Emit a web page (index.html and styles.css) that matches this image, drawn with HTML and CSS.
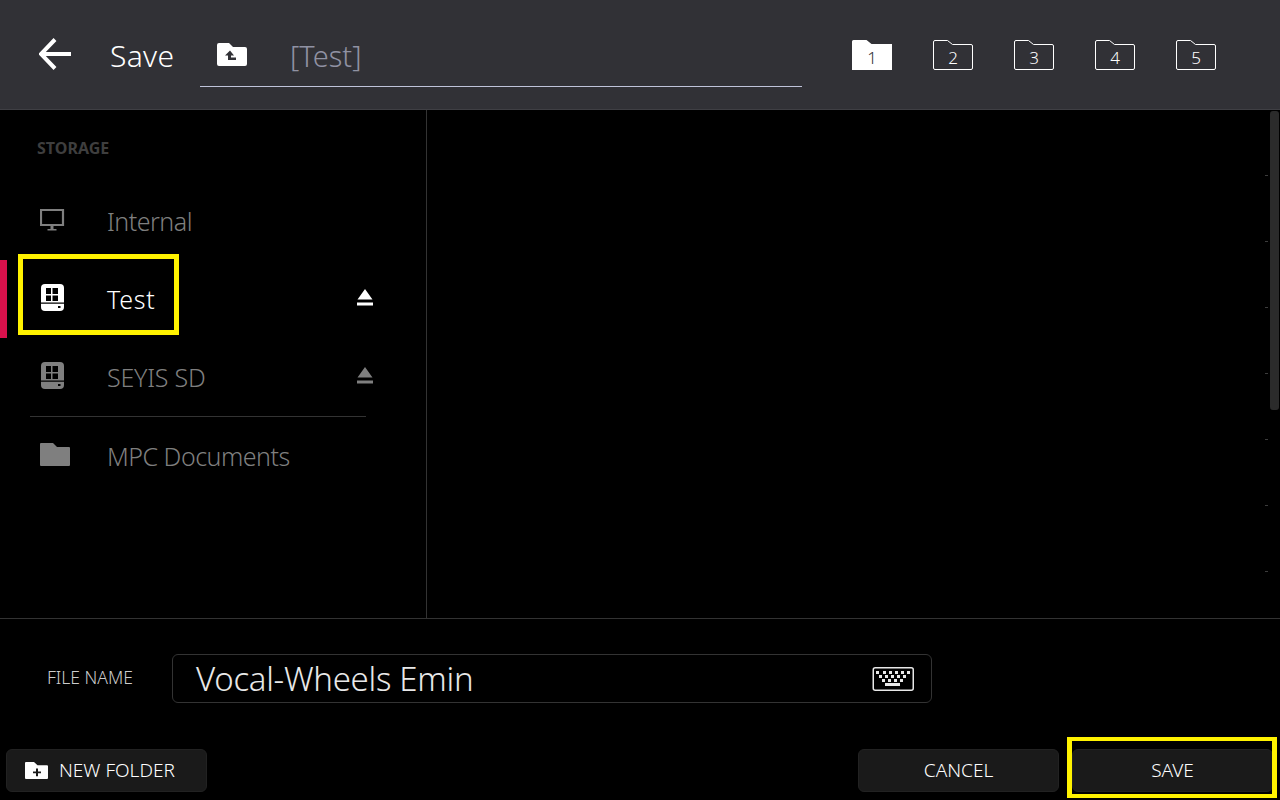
FILE: index.html
```html
<!DOCTYPE html>
<html lang="en">
<head>
<meta charset="utf-8">
<title>Save</title>
<link rel="stylesheet" href="styles.css">
</head>
<body>
<div class="page">
  <header class="header">
    <svg class="back" width="32" height="32" viewBox="0 0 32 32"><path d="M32 16H3M16 1.500L2 16l14 14.500" fill="none" stroke="#fff" stroke-width="4"/></svg>
    <h1 class="title">Save</h1>
    <div class="path">
      <svg class="up" width="30" height="23" viewBox="0 0 30 23"><path d="M2 0h10l4 4h12a2 2 0 0 1 2 2v15a2 2 0 0 1-2 2H2a2 2 0 0 1-2-2V2a2 2 0 0 1 2-2z" fill="#fff"/><path d="M13 7.500l-5 5h3v4.500h8v-2.500h-5v-2h3z" fill="#313136"/></svg>
      <span class="path-text">[Test]</span>
    </div>
    <div class="slots">
      <div class="slot active"><svg width="40" height="30" viewBox="0 0 40 30"><path d="M0 1.500A1.500 1.500 0 0 1 1.500 0h13l5 4H40v26H0z" fill="#fff"/></svg><span>1</span></div>
      <div class="slot"><svg width="40" height="30" viewBox="0 0 40 30"><path d="M.5 2A1.500 1.500 0 0 1 2 .5h12.500l5 4H38A1.500 1.500 0 0 1 39.500 6v22a1.500 1.500 0 0 1-1.500 1.500H2A1.500 1.500 0 0 1 .5 28z" fill="none" stroke="#fff"/></svg><span>2</span></div>
      <div class="slot"><svg width="40" height="30" viewBox="0 0 40 30"><path d="M.5 2A1.500 1.500 0 0 1 2 .5h12.500l5 4H38A1.500 1.500 0 0 1 39.500 6v22a1.500 1.500 0 0 1-1.500 1.500H2A1.500 1.500 0 0 1 .5 28z" fill="none" stroke="#fff"/></svg><span>3</span></div>
      <div class="slot"><svg width="40" height="30" viewBox="0 0 40 30"><path d="M.5 2A1.500 1.500 0 0 1 2 .5h12.500l5 4H38A1.500 1.500 0 0 1 39.500 6v22a1.500 1.500 0 0 1-1.500 1.500H2A1.500 1.500 0 0 1 .5 28z" fill="none" stroke="#fff"/></svg><span>4</span></div>
      <div class="slot"><svg width="40" height="30" viewBox="0 0 40 30"><path d="M.5 2A1.500 1.500 0 0 1 2 .5h12.500l5 4H38A1.500 1.500 0 0 1 39.500 6v22a1.500 1.500 0 0 1-1.500 1.500H2A1.500 1.500 0 0 1 .5 28z" fill="none" stroke="#fff"/></svg><span>5</span></div>
    </div>
  </header>

  <main class="content">
    <aside class="sidebar">
      <div class="section-label">STORAGE</div>
      <div class="row dim">
        <span class="icon"><svg width="26" height="22" viewBox="0 0 26 22"><path d="M1 1h22v15H1z" fill="none" stroke="currentColor" stroke-width="2.200"/><path d="M10.500 17h3v3h3v1.500h-9V20h3z" fill="currentColor"/></svg></span>
        <span class="name">Internal</span>
      </div>
      <div class="row selected">
        <span class="icon"><svg width="23" height="27" viewBox="0 0 23 27"><path d="M4 0h15a4 4 0 0 1 4 4v19a4 4 0 0 1-4 4H4a4 4 0 0 1-4-4V4a4 4 0 0 1 4-4z" fill="currentColor"/><path d="M5 4h5v6H5zM11.500 4H17v6h-5.500zM5 11.500h5V17H5zM11.500 11.500H17V17h-5.500zM0 18.500h23v1.300H0zM17 22h2.500v2H17z" fill="#000"/></svg></span>
        <span class="name">Test</span>
        <svg class="eject" width="16" height="17" viewBox="0 0 16 17"><path d="M8 0l7.500 10.500H.5zM0 13.500h16V16.500H0z" fill="currentColor"/></svg>
      </div>
      <div class="row dim">
        <span class="icon"><svg width="23" height="27" viewBox="0 0 23 27"><path d="M4 0h15a4 4 0 0 1 4 4v19a4 4 0 0 1-4 4H4a4 4 0 0 1-4-4V4a4 4 0 0 1 4-4z" fill="currentColor"/><path d="M5 4h5v6H5zM11.500 4H17v6h-5.500zM5 11.500h5V17H5zM11.500 11.500H17V17h-5.500zM0 18.500h23v1.300H0zM17 22h2.500v2H17z" fill="#000"/></svg></span>
        <span class="name name-wide">SEYIS SD</span>
        <svg class="eject" width="16" height="17" viewBox="0 0 16 17"><path d="M8 0l7.500 10.500H.5zM0 13.500h16V16.500H0z" fill="currentColor"/></svg>
      </div>
      <div class="divider"></div>
      <div class="row dim last">
        <span class="icon"><svg width="30" height="23" viewBox="0 0 30 23"><path d="M1 0h12l4 4h12a1 1 0 0 1 1 1v17a1 1 0 0 1-1 1H1a1 1 0 0 1-1-1V1a1 1 0 0 1 1-1z" fill="currentColor"/></svg></span>
        <span class="name">MPC Documents</span>
      </div>
      <div class="callout callout-test"></div>
    </aside>
    <section class="files">
      <div class="ticks"><i></i><i></i><i></i><i></i><i></i><i></i><i></i></div>
      <div class="scrollbar"></div>
    </section>
  </main>

  <div class="file-row">
    <label class="file-label">FILE NAME</label>
    <div class="file-input">
      <span class="file-value">Vocal-Wheels Emin</span>
      <svg width="42" height="24" viewBox="0 0 42 24"><rect x="1.250" y=".75" width="40" height="22.500" rx="2" fill="none" stroke="#e8e8e8" stroke-width="1.500"/><path d="M4 4h3v3H4zM11 4h3v3h-3zM17 4h3v3h-3zM23 4h3v3h-3zM29 4h3v3h-3zM35 4h3v3h-3zM7 8h3v3H7zM13 8h3v3h-3zM19 8h3v3h-3zM25 8h3v3h-3zM31 8h3v3h-3zM10 12h3v3h-3zM16 12h3v3h-3zM22 12h3v3h-3zM28 12h3v3h-3zM13 16h15v3H13z" fill="#e8e8e8"/></svg>
    </div>
  </div>

  <footer class="actions">
    <button class="btn btn-new"><svg width="23" height="17" viewBox="0 0 23 18" preserveAspectRatio="none"><path d="M1 0h8l3.500 3.500H22a1 1 0 0 1 1 1V17a1 1 0 0 1-1 1H1a1 1 0 0 1-1-1V1a1 1 0 0 1 1-1z" fill="#fff"/><path d="M11 7h2v3h3v2h-3v3h-2v-3H8v-2h3z" fill="#1a1a1a"/></svg><span class="btn-text">NEW FOLDER</span></button>
    <button class="btn btn-cancel"><span class="btn-text">CANCEL</span></button>
    <button class="btn btn-save"><span class="btn-text">SAVE</span><span class="callout callout-save"></span></button>
  </footer>
</div>
</body>
</html>
```
FILE: styles.css
```css
* { box-sizing: border-box; }
html, body { margin: 0; padding: 0; background: #000; }
body { font-family: "Noto Sans", "Open Sans", sans-serif; color: #fff; overflow: hidden; }
.page { width: 1280px; height: 800px; display: flex; flex-direction: column; background: #000; }

.header { height: 110px; flex: none; background: #313136; border-bottom: 1px solid #3f3f44; display: flex; align-items: center; padding-left: 39px; }
.back { flex: none; margin-top: -2px; }
.title { margin: 2px 0 0 39px; width: 90px; font-size: 30px; font-weight: 300; line-height: 40px; color: #fff; flex: none; letter-spacing: .3px; }
.path { width: 602px; height: 86px; margin-top: 1px; margin-bottom: -1px; align-self: flex-start; flex: none; border-bottom: 1px solid #bfc3da; display: flex; align-items: flex-start; padding-left: 17px; padding-top: 42px; }
.up { flex: none; }
.path-text { margin-left: 43px; font-size: 29px; font-weight: 300; line-height: 26px; color: #9092a3; }
.slots { display: flex; gap: 41px; margin-left: 50px; }
.slot { position: relative; width: 40px; height: 30px; }
.slot svg { display: block; }
.slot span { position: absolute; left: 0; right: 0; top: 7px; text-align: center; font-size: 17px; font-weight: 300; line-height: 22px; color: #fff; }
.slot.active span { color: #313136; }

.content { height: 509px; flex: none; display: flex; border-bottom: 1px solid #333; }
.sidebar { width: 427px; flex: none; border-right: 1px solid #333; position: relative; }
.section-label { height: 72px; padding: 26px 0 0 37px; font-size: 16px; font-weight: 700; line-height: 24px; color: #3e3e3e; }
.row { height: 78px; display: flex; align-items: center; padding: 0 53px 0 40px; position: relative; }
.row.dim { color: #7f7f7f; }
.row.selected { color: #fff; }
.row.selected::before { content: ""; position: absolute; left: 0; top: 0; bottom: 0; width: 7px; background: #d9114c; }
.row.last { height: 77px; }
.icon { width: 67px; flex: none; display: flex; }
.row .icon svg { display: block; margin-top: -3px; }
.selected .icon svg, .row:nth-child(4) .icon svg { margin-left: 1px; }
.name { font-size: 25px; font-weight: 300; line-height: 30px; flex: 1; letter-spacing: -.5px; }
.selected .name { letter-spacing: .7px; }
.dim .name { color: #7f7f7f; }
.dim .name-wide { letter-spacing: -.2px; }
.eject { flex: none; margin-top: -3px; }
.divider { height: 1px; margin: 0 60px 0 30px; background: #333; }
.callout { position: absolute; border-style: solid; border-color: #fff200; pointer-events: none; }
.callout-test { left: 18px; top: 144px; width: 161px; height: 81px; border-width: 5px; }

.files { flex: 1; display: flex; justify-content: flex-end; align-items: flex-start; }
.ticks { width: 3px; margin-right: 2px; padding-top: 65px; display: flex; flex-direction: column; gap: 65px; }
.ticks i { display: block; height: 1px; background: #3c3c3c; }
.scrollbar { width: 9px; height: 299px; margin: 1px 1px 0 0; background: #2b2b2b; border-radius: 3px; }

.file-row { height: 130px; flex: none; display: flex; align-items: flex-start; }
.file-label { width: 172px; flex: none; padding-left: 47px; margin-top: 46px; font-size: 17.500px; font-weight: 300; line-height: 24px; color: #ccc; }
.file-input { width: 760px; height: 49px; margin-top: 35px; margin-left: 0; flex: none; border: 1px solid #333; border-radius: 6px; display: flex; align-items: center; padding: 0 17px 0 23px; justify-content: space-between; }
.file-value { font-size: 33px; font-weight: 300; line-height: 44px; color: #e8e8e8; letter-spacing: -.3px; }

.actions { height: 51px; flex: none; display: flex; align-items: flex-start; padding-left: 6px; }
.btn { height: 43px; width: 201px; border: 1px solid #222; border-radius: 6px; background: #1a1a1a; color: #fff; font: 300 19px/24px "Noto Sans", "Open Sans", sans-serif; padding: 0; display: flex; align-items: center; justify-content: center; position: relative; }
.btn svg { margin-top: -1px; }
.btn-text { margin-top: -2px; }
.btn-new { justify-content: flex-start; padding-left: 18px; gap: 11px; }
.btn-cancel { margin-left: 651px; }
.btn-save { margin-left: 13px; width: 201px; }
.callout-save { left: -6px; top: -13px; width: 210px; height: 61px; border-width: 4px 5px; }
```
